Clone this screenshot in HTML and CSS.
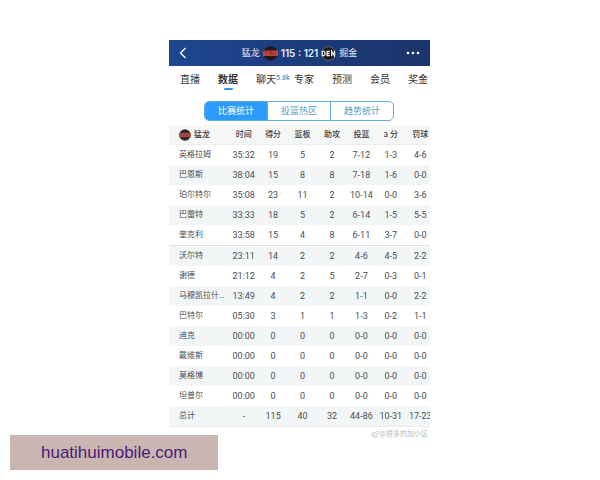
FILE: index.html
```
<!DOCTYPE html>
<html lang="zh-CN">
<head>
    <meta charset="UTF-8">
    <meta name="viewport" content="width=device-width, initial-scale=1.0">
    <title>猛龙 115 : 121 掘金</title>
    <link rel="stylesheet" href="styles.css">
</head>
<body>
    <main class="phone">
        <header class="topbar">
            <button class="back" type="button" aria-label="返回">
                <svg width="8" height="12" viewBox="0 0 8 12"><path d="M6.5 1L1.5 6l5 5" fill="none" stroke="#fff" stroke-width="1.3"/></svg>
            </button>
            <h1 class="score">
                <span>猛龙</span>
                <svg class="logo" viewBox="0 0 14 14">
                    <circle cx="7" cy="7" r="6.8" fill="#24181f"/>
                    <path d="M0 4.2h14v5H0z" fill="#c9473f"/>
                    <path d="M1.5 5.3h3M3 5.3v3M6 8.3v-3h2v3M9.5 5.3v3M11.5 5.3v3" fill="none" stroke="#7d2b2c" stroke-width=".7"/>
                </svg>
                <b>115 : 121</b>
                <svg class="logo" viewBox="0 0 14 14">
                    <circle cx="7" cy="7" r="6.4" fill="#17181c" stroke="#77726a" stroke-width=".8"/>
                    <path d="M1.200 5v4h1.500l1-1V6l-1-1zM8.300 5H5.700v4h2.600M5.700 7h2.200M10 9.500V5l2.500 4V4.500" fill="none" stroke="#f3efe6" stroke-width="1.200"/>
                </svg>
                <span>掘金</span>
            </h1>
            <button class="more" type="button" aria-label="更多">
                <svg width="14" height="4" viewBox="0 0 14 4" fill="#fff"><circle cx="2" cy="2" r="1.3"/><circle cx="7" cy="2" r="1.3"/><circle cx="12" cy="2" r="1.3"/></svg>
            </button>
        </header>
        <nav class="tabs">
            <a href="#">直播</a>
            <a class="active" href="#">数据</a>
            <a href="#">聊天<sup>5.8k</sup></a>
            <a href="#">专家</a>
            <a href="#">预测</a>
            <a href="#">会员</a>
            <a href="#">奖金</a>
        </nav>
        <div class="segment">
            <button class="on" type="button">比赛统计</button>
            <button type="button">投篮热区</button>
            <button type="button">趋势统计</button>
        </div>
        <table class="stats">
            <thead>
                <tr>
                    <th class="name">
                        <div class="team">
                            <svg width="12" height="12" viewBox="0 0 14 14">
                                <circle cx="7" cy="7" r="6.8" fill="#33242a"/>
                                <path d="M.5 4.5h13v5H.5z" fill="#b04a49"/>
                                <path d="M2 6h3M3.5 6v2.5M6 8.5V6h2v2.5M9.5 6v2.5M11.5 6v2.5" fill="none" stroke="#7d3236" stroke-width=".6"/>
                            </svg>
                            猛龙
                        </div>
                    </th>
                    <th>时间</th><th>得分</th><th>篮板</th><th>助攻</th><th>投篮</th><th>3 分</th><th>罚球</th>
                </tr>
            </thead>
            <tbody>
                <tr><td class="name">英格拉姆</td><td>35:32</td><td>19</td><td>5</td><td>2</td><td>7-12</td><td>1-3</td><td>4-6</td></tr>
                <tr><td class="name">巴恩斯</td><td>38:04</td><td>15</td><td>8</td><td>8</td><td>7-18</td><td>1-6</td><td>0-0</td></tr>
                <tr><td class="name">珀尔特尔</td><td>35:08</td><td>23</td><td>11</td><td>2</td><td>10-14</td><td>0-0</td><td>3-6</td></tr>
                <tr><td class="name">巴雷特</td><td>33:33</td><td>18</td><td>5</td><td>2</td><td>6-14</td><td>1-5</td><td>5-5</td></tr>
                <tr class="last-starter"><td class="name">奎克利</td><td>33:58</td><td>15</td><td>4</td><td>8</td><td>6-11</td><td>3-7</td><td>0-0</td></tr>
                <tr><td class="name">沃尔特</td><td>23:11</td><td>14</td><td>2</td><td>2</td><td>4-6</td><td>4-5</td><td>2-2</td></tr>
                <tr><td class="name">谢德</td><td>21:12</td><td>4</td><td>2</td><td>5</td><td>2-7</td><td>0-3</td><td>0-1</td></tr>
                <tr><td class="name">马穆凯拉什…</td><td>13:49</td><td>4</td><td>2</td><td>2</td><td>1-1</td><td>0-0</td><td>2-2</td></tr>
                <tr><td class="name">巴特尔</td><td>05:30</td><td>3</td><td>1</td><td>1</td><td>1-3</td><td>0-2</td><td>1-1</td></tr>
                <tr><td class="name">迪克</td><td>00:00</td><td>0</td><td>0</td><td>0</td><td>0-0</td><td>0-0</td><td>0-0</td></tr>
                <tr><td class="name">戴维斯</td><td>00:00</td><td>0</td><td>0</td><td>0</td><td>0-0</td><td>0-0</td><td>0-0</td></tr>
                <tr><td class="name">莫格博</td><td>00:00</td><td>0</td><td>0</td><td>0</td><td>0-0</td><td>0-0</td><td>0-0</td></tr>
                <tr><td class="name">坦普尔</td><td>00:00</td><td>0</td><td>0</td><td>0</td><td>0-0</td><td>0-0</td><td>0-0</td></tr>
                <tr class="total"><td class="name">总计</td><td>-</td><td>115</td><td>40</td><td>32</td><td>44-86</td><td>10-31</td><td>17-23</td></tr>
            </tbody>
        </table>
        <footer class="credit">
            <svg width="9" height="8" viewBox="0 0 9 8" fill="none" stroke="#c6c6c6"><ellipse cx="3.5" cy="5" rx="3" ry="2.3"/><circle cx="3.5" cy="5" r=".6"/><path d="M5.5 1.500c2-1 3 .5 2.500 2"/></svg>
            @很多的加小区
        </footer>
    </main>
    <a class="site-link" href="#">huatihuimobile.com</a>
</body>
</html>
```
FILE: styles.css
```
* {
    margin: 0;
    padding: 0;
    box-sizing: border-box;
}
body {
    padding: 40px 1px 0 0;
    background: #fff;
    font-family: Roboto, "Noto Sans CJK SC", sans-serif;
    color: #4a4d50;
}
button {
    border: 0;
    background: none;
    font: inherit;
    color: inherit;
}
a {
    color: inherit;
    text-decoration: none;
}
svg {
    display: block;
}
.phone {
    max-width: 261px;
    margin: 0 auto;
    overflow: hidden;
}
.topbar {
    height: 26px;
    padding: 0 10px;
    display: flex;
    align-items: center;
    justify-content: space-between;
    color: #e6ebf5;
    background: linear-gradient(90deg, #1e4791, #1b3a78 60%, #1d356b);
}
.back,
.more {
    width: 14px;
}
.score {
    display: flex;
    align-items: center;
    gap: 3px;
    font-size: 9px;
    font-weight: 400;
    line-height: 16px;
    white-space: nowrap;
}
.score b {
    font-size: 10px;
    font-family: Inter, sans-serif;
    font-weight: 600;
}
.logo {
    width: 15px;
    height: 15px;
}
.tabs {
    display: flex;
    padding: 4px 0 0 2px;
}
.tabs a {
    flex: 0 0 38px;
    height: 20px;
    font-size: 10px;
    line-height: 20px;
    text-align: center;
    color: #333;
    position: relative;
}
.tabs .active {
    font-weight: 700;
}
.tabs .active::after {
    content: "";
    position: absolute;
    left: 15px;
    bottom: 0;
    width: 9px;
    height: 2px;
    border-radius: 1px;
    background: #2c97e6;
}
.tabs sup {
    position: absolute;
    top: -2px;
    left: 29px;
    font-size: 7px;
    font-weight: 500;
    line-height: 20px;
    color: #3a9fc9;
}
.segment {
    display: flex;
    margin: 11px 36px 4px 35px;
    border: 1px solid #5fb0d3;
    border-radius: 5px;
    overflow: hidden;
}
.segment button {
    flex: 1;
    height: 18px;
    font-size: 9px;
    line-height: 18px;
    color: #4a9dbf;
}
.segment button + button {
    border-left: 1px solid #5fb0d3;
}
.segment .on {
    color: #fff;
    background: #2b9cfb;
}
/* the last column runs past the right edge */
.stats {
    width: calc(100% + 5px);
    table-layout: fixed;
    border-collapse: separate;
    border-spacing: 0;
    font-size: 9px;
    line-height: 20px;
    text-align: center;
    white-space: nowrap;
}
.stats th {
    font-size: 8px;
    font-weight: 500;
    line-height: 19px;
    color: #3c4043;
    background: #f5f7f7;
    border-bottom: 1px solid #eceeee;
}
.stats .name {
    width: 60px;
    padding-left: 10px;
    font-size: 8px;
    text-align: left;
}
.stats tbody tr:nth-child(even) {
    background: #f2f6f7;
}
.stats .last-starter td {
    border-bottom: 1px solid #dfe3e4;
}
.stats .total td {
    border-bottom: 1px solid #e8ecec;
}
.team {
    display: flex;
    align-items: center;
    gap: 3px;
}
.credit {
    display: flex;
    justify-content: flex-end;
    align-items: center;
    padding-right: 2px;
    font-size: 7px;
    line-height: 14px;
    color: #b9b9b9;
}
.site-link {
    position: fixed;
    left: 10px;
    bottom: 10px;
    padding: 0 31px;
    font: 17px/35px "Liberation Sans", Arial, sans-serif;
    color: #4b1a78;
    background: #c9b6b0;
}
```
